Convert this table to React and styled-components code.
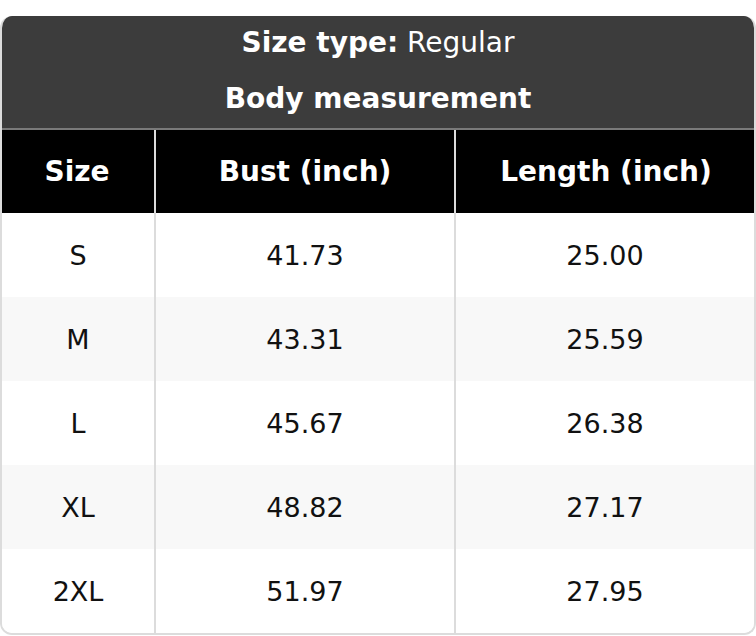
import React from 'react';
import styled, { createGlobalStyle } from 'styled-components';

const GlobalStyle = createGlobalStyle`
    body {
        margin: 0;
        background: #fff;
        font-family: "DejaVu Sans", "Liberation Sans", sans-serif;
    }
`;

const Page = styled.div`
    padding-top: 16px;
`;

const Card = styled.div`
    width: 756px;
    box-sizing: border-box;
    border-radius: 12px;
    overflow: hidden;
    border: 2px solid #dcdcdc;
    border-top: none;
    background: #fff;
`;

const Caption = styled.div`
    background: #3c3c3c;
    color: #fff;
    margin: 0 -2px;
    border-bottom: 2px solid #7a7a7a;
`;

const CaptionLine = styled.div`
    height: 56px;
    box-sizing: border-box;
    padding-bottom: 4px;
    display: flex;
    align-items: center;
    justify-content: center;
    font-size: 28px;
    font-weight: ${(p) => (p.$bold ? 700 : 400)};
    b { font-weight: 700; }
`;

const Row = styled.div`
    display: grid;
    height: ${(p) => (p.$head ? '83px' : '84px')};
    background: ${(p) => (p.$head ? '#000' : p.$striped ? '#f8f8f8' : '#fff')};
    color: ${(p) => (p.$head ? '#fff' : '#111')};
    font-weight: ${(p) => (p.$head ? 700 : 400)};
    font-size: ${(p) => (p.$head ? '28px' : '27px')};
    margin: ${(p) => (p.$head ? '0 -2px' : '0')};
    grid-template-columns: ${(p) => (p.$head ? '154px 300px 1fr' : '152px 300px 1fr')};
`;

const Cell = styled.div`
    display: flex;
    align-items: center;
    justify-content: center;
    & + & {
        border-left: 2px solid ${(p) => (p.$head ? '#7a7a7a' : '#dcdcdc')};
    }
`;

const rows = [
    ['S', '41.73', '25.00'],
    ['M', '43.31', '25.59'],
    ['L', '45.67', '26.38'],
    ['XL', '48.82', '27.17'],
    ['2XL', '51.97', '27.95'],
];

export default function App() {
    return (
        <Page>
            <GlobalStyle />
            <Card>
                <Caption>
                    <CaptionLine><b>Size type:</b>&nbsp;Regular</CaptionLine>
                    <CaptionLine $bold>Body measurement</CaptionLine>
                </Caption>
                <Row $head>
                    <Cell $head>Size</Cell>
                    <Cell $head>Bust (inch)</Cell>
                    <Cell $head>Length (inch)</Cell>
                </Row>
                {rows.map((r, i) => (
                    <Row key={r[0]} $striped={i % 2 === 1}>
                        {r.map((v, j) => <Cell key={j}>{v}</Cell>)}
                    </Row>
                ))}
            </Card>
        </Page>
    );
}
